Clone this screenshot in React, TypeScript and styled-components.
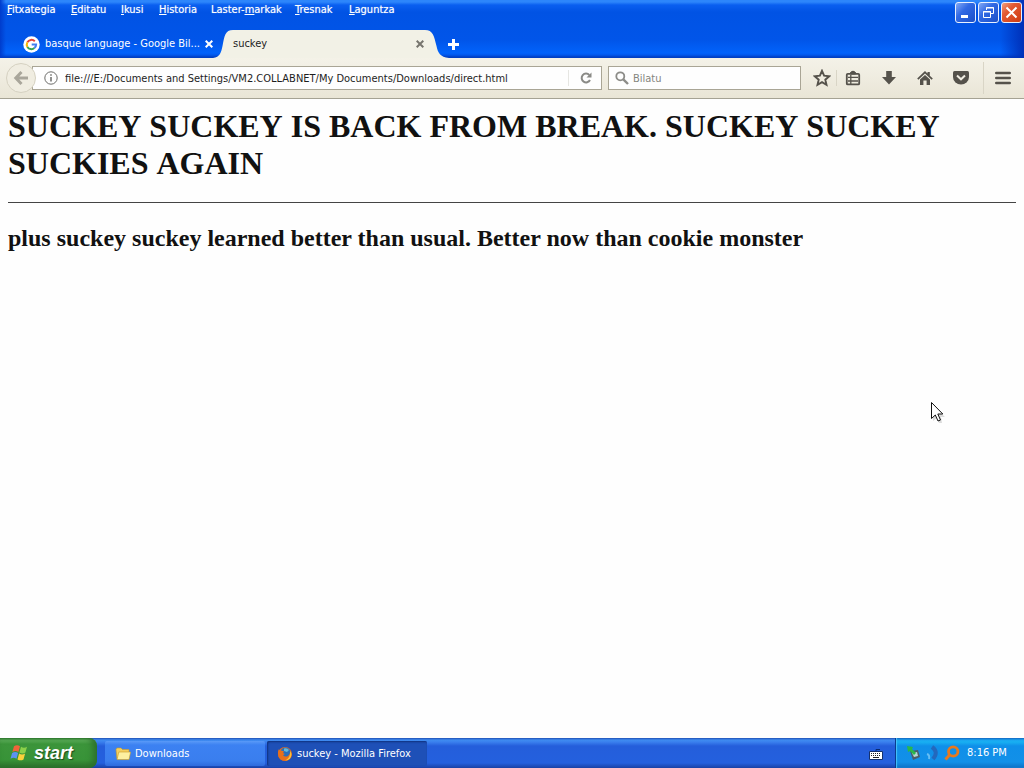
import React from "react";
import styled, { createGlobalStyle, css } from "styled-components";

const GlobalStyle = createGlobalStyle`
  * { box-sizing: border-box; }
  body { margin: 0; background: #fefefe; }
  button, input { font: inherit; color: inherit; }
  button { padding: 0; border: 0; background: none; }
`;

const Desktop = styled.div`
  position: relative;
  display: flex;
  flex-direction: column;
  min-height: 100vh;
  font: 11px/16px "DejaVu Sans Condensed", "Noto Sans", sans-serif;
`;

const TitleBar = styled.header`
  display: flex;
  flex-direction: column;
  justify-content: space-between;
  height: 58px;
  color: #fff;
  background:
    linear-gradient(90deg, #003ccc 0, transparent 6px, transparent calc(100% - 24px), #0030b8 100%),
    linear-gradient(#2d86fb 0, #2d86fb 2px, #0a5ff0 5px, #0153e4 12px, #0155e9 40px, #0263fb 53px, #0258ec 55px, #0140c4 57px, #0140c4 100%);
`;

const TopRow = styled.div`
  display: flex;
  justify-content: space-between;
  height: 24px;
`;

const Menu = styled.nav`
  display: flex;
  gap: 16px;
  padding: 2px 7px;
`;

const MenuItem = styled.button<{ $width: number }>`
  width: ${(p) => p.$width}px;
  height: 16px;
  white-space: nowrap;
  text-align: left;
  line-height: 16px;
  text-shadow: 0 0 1px #ffffff99;
`;

const WindowControls = styled.div`
  display: flex;
  gap: 2px;
  padding: 2px 2px 0 0;
`;

const ControlButton = styled.button<{ $close?: boolean }>`
  display: grid;
  place-items: center;
  width: 21px;
  height: 21px;
  border: 1px solid #e8f0ff;
  border-radius: 3px;
  background: ${(p) =>
    p.$close
      ? "linear-gradient(135deg, #f0a080, #e35a33 35%, #cf3b10)"
      : "linear-gradient(135deg, #83a9f5, #3169e4 40%, #1a4fc8)"};
`;

const TabStrip = styled.div`
  display: flex;
  height: 28px;
  padding-left: 23px;
`;

const InactiveTab = styled.div`
  display: flex;
  align-items: center;
  width: 190px;
  gap: 5px;
  text-shadow: 0 0 1px #ffffff99;
`;

const ActiveTab = styled.div`
  display: flex;
  width: 236px;
`;

const ActiveTabBody = styled.div`
  display: flex;
  flex: 1;
  align-items: center;
  background: #f2f1e6;
  color: #222;
`;

const TabTitle = styled.button`
  flex: 1;
  white-space: nowrap;
  text-align: left;
`;

const IconButton = styled.button<{ $size: number }>`
  display: grid;
  flex: none;
  place-items: center;
  width: ${(p) => p.$size}px;
  height: 24px;
`;

const NewTabButton = styled(IconButton)`
  height: 28px;
  margin-left: -4px;
`;

const Toolbar = styled.div`
  display: flex;
  align-items: center;
  height: 41px;
  padding: 0 2px 0 6px;
  color: #55524b;
  background: linear-gradient(#f4f2e8, #efece0 50%, #e9e5d6);
  border-bottom: 1px solid #a5a293;
`;

const BackButton = styled.button`
  display: grid;
  flex: none;
  place-items: center;
  z-index: 1;
  width: 30px;
  height: 30px;
  margin-right: -4px;
  border: 1px solid #d5d1c1;
  border-radius: 50%;
  background: #f0ede1;
`;

const field = css`
  display: flex;
  align-items: center;
  height: 24px;
  border: 1px solid #a9a595;
  background: #fefefe;
`;

const AddressBar = styled.div`
  ${field}
  flex: 1;
  min-width: 0;
  gap: 2px;
  padding-left: 6px;
`;

const SearchBar = styled.label`
  ${field}
  width: 193px;
  margin: 0 7px 0 6px;
  padding-left: 6px;
  gap: 4px;
`;

const TextInput = styled.input`
  flex: 1;
  min-width: 0;
  height: 20px;
  padding: 0;
  border: 0;
  outline: 0;
  background: transparent;
  color: #1d1d1d;
  &::placeholder { color: #85857f; opacity: 1; }
`;

const Separator = styled.span<{ $tall?: boolean }>`
  width: 1px;
  height: ${(p) => (p.$tall ? 32 : 16)}px;
  margin-left: ${(p) => (p.$tall ? 2 : 0)}px;
  background: #d9d5c6;
`;

const FieldSeparator = styled(Separator)`
  background: #e6e6e2;
`;

const Page = styled.main`
  flex: 1;
  padding: 9px 8px;
  color: #111;
  font-family: "Liberation Serif", serif;
`;

const Heading = styled.h1`
  margin: 0 0 20px;
  font-size: 32px;
  line-height: 37px;
  font-kerning: none;
`;

const Rule = styled.hr`
  height: 1px;
  margin: 0;
  border: 0;
  background: #444;
`;

const SubHeading = styled.h2`
  margin: 22px 0 0;
  font-size: 24px;
  line-height: 27px;
`;

const Pointer = styled.svg`
  position: absolute;
  left: 930px;
  top: 401px;
`;

const Taskbar = styled.footer`
  display: flex;
  height: 30px;
  color: #fff;
  background: linear-gradient(#1f4fb4 0, #3f8bf0 2px, #3a80ee 4px, #245edb 8px, #2460de 25px, #1941a5 30px);
`;

const StartButton = styled.button`
  display: flex;
  align-items: center;
  gap: 5px;
  width: 97px;
  padding: 0 0 1px 10px;
  border-radius: 0 8px 8px 0;
  font: italic bold 18px/24px "Liberation Sans", sans-serif;
  text-shadow: 1px 1px 1px #1c4a1c;
  background: linear-gradient(#2d7a2d 0, #5fb45c 2px, #3c953b 6px, #389338 22px, #2a6f2a 30px);
  box-shadow: inset -4px 0 6px #2c702c;
`;

const TaskList = styled.div`
  display: flex;
  flex: 1;
  gap: 2px;
  padding: 3px 0 2px 8px;
`;

const TaskButton = styled.button<{ $active?: boolean }>`
  display: flex;
  align-items: center;
  gap: 4px;
  width: 160px;
  padding-left: 10px;
  border-radius: 2px;
  background: ${(p) =>
    p.$active ? "#1e50b7" : "linear-gradient(#5a9af8, #3c81f2 4px, #3a7eee 20px, #2f6bdd)"};
  box-shadow: ${(p) => (p.$active ? "inset 1px 1px 2px #0f307c" : "none")};
`;

const LanguageButton = styled.button`
  display: grid;
  place-items: center;
  width: 38px;
  padding-top: 2px;
`;

const Tray = styled.div`
  display: flex;
  align-items: center;
  width: 129px;
  gap: 3px;
  padding-left: 10px;
  border-left: 1px solid #0a3c8e;
  background: linear-gradient(#0c59b9 0, #1aa5f0 2px, #18b0f2 4px, #0f8fe9 8px, #1290e8 24px, #0d6fc4 30px);
  box-shadow: inset 1px 0 1px #48c4fb;
`;

const Clock = styled.time`
  margin-left: 4px;
  white-space: nowrap;
`;

const menuItems = [
  { before: "", key: "F", after: "itxategia", width: 48 },
  { before: "", key: "E", after: "ditatu", width: 34 },
  { before: "", key: "I", after: "kusi", width: 22 },
  { before: "", key: "H", after: "istoria", width: 36 },
  { before: "Laster-", key: "m", after: "arkak", width: 68 },
  { before: "", key: "T", after: "resnak", width: 38 },
  { before: "", key: "L", after: "aguntza", width: 46 },
];

const Cross = ({ color }: { color: string }) => (
  <svg width="8" height="8" viewBox="0 0 8 8" stroke={color} strokeWidth="2">
    <path d="M.7.7l6.6 6.6M7.3.7L.7 7.3" />
  </svg>
);

const GoogleIcon = () => (
  <svg width="17" height="17" viewBox="0 0 17 17" fill="none" strokeWidth="2">
    <circle cx="8.5" cy="8.5" r="8.2" fill="#fff" />
    <path d="M11.8 5.2A4.7 4.7 0 0 0 4.4 6.3" stroke="#e54335" />
    <path d="M4.4 6.3a4.7 4.7 0 0 0 0 4.6" stroke="#f6b704" />
    <path d="M4.4 10.9a4.7 4.7 0 0 0 7 1.2" stroke="#34a353" />
    <path d="M11.4 12.1a4.7 4.7 0 0 0 1.7-3.5H8.7" stroke="#4280ef" />
  </svg>
);

const WindowsFlag = () => (
  <svg width="19" height="18" viewBox="0 0 19 18">
    <path d="M4 2.2q3-2 6 0L8.4 8q-3-1.8-6 0z" fill="#f0643a" />
    <path d="M11 2.8q3 1.8 6 0L15.4 8.5q-3 1.8-6 0z" fill="#8bd04a" />
    <path d="M2.1 9q3-1.9 6 0l-1.6 5.7q-3-1.8-6 0z" fill="#5c92f2" />
    <path d="M9.1 9.6q3 1.8 6 0l-1.6 5.8q-3 1.8-6 0z" fill="#fbd13b" />
  </svg>
);

const FolderIcon = () => (
  <svg width="16" height="16" viewBox="0 0 16 16" stroke="#c99a26" strokeWidth=".6">
    <path d="M1 3.5L2 2h4l1.500 1.500H14V13H2z" fill="#f4cf5e" />
    <path d="M3.800 6H15.600L14 13.600H2z" fill="#fdf0a0" />
  </svg>
);

const FirefoxIcon = () => (
  <svg width="16" height="16" viewBox="0 0 16 16">
    <circle cx="8" cy="8" r="7" fill="#e66a1b" />
    <circle cx="8.4" cy="6.8" r="5.2" fill="#2b6fb8" />
    <path d="M7 2.500q3-1 5 1.500l-2 2-3-1z" fill="#5fb8dc" />
    <path d="M1.500 3.500L4 4.600l3 .6-1 1.800 1.800 1-1.800 1.200q2 2.200 5 .8 2.500-1.500 2-5.200Q15.800 9 12.800 13 8 16.400 3.500 13.400-.3 9.800 1.500 3.500z" fill="#e8701a" />
    <path d="M13.200 4.800Q15.800 9 12.800 12.800q-2 1.800-4.500 1.700 5.500-3 4.900-9.700z" fill="#fbc63c" />
  </svg>
);

export default function App() {
  return (
    <Desktop>
      <GlobalStyle />
      <TitleBar>
        <TopRow>
          <Menu>
            {menuItems.map((m) => (
              <MenuItem key={m.after} $width={m.width}>
                {m.before}<u>{m.key}</u>{m.after}
              </MenuItem>
            ))}
          </Menu>
          <WindowControls>
            <ControlButton aria-label="Minimize">
              <svg width="15" height="15" viewBox="0 0 15 15"><path d="M3 10h7v3H3z" fill="#fff" /></svg>
            </ControlButton>
            <ControlButton aria-label="Restore">
              <svg width="15" height="15" viewBox="0 0 15 15" fill="none" stroke="#fff">
                <path d="M5.500 5V2.500h7v6H10M5 3h8M2.500 6.500h7v6h-7zM2 7h8" />
              </svg>
            </ControlButton>
            <ControlButton $close aria-label="Close">
              <svg width="15" height="15" viewBox="0 0 15 15" stroke="#fff" strokeWidth="2"><path d="M2.500 2.500l10 10M12.500 2.500l-10 10" /></svg>
            </ControlButton>
          </WindowControls>
        </TopRow>
        <TabStrip>
          <InactiveTab>
            <GoogleIcon />
            <TabTitle>basque language - Google Bil...</TabTitle>
            <IconButton $size={8} aria-label="Close tab"><Cross color="#fff" /></IconButton>
          </InactiveTab>
          <ActiveTab>
            <svg width="20" height="28" viewBox="0 0 20 28"><path d="M0 28C7 27 8 23 9.500 16C11.500 6 12 0 20 0V28z" fill="#f2f1e6" /></svg>
            <ActiveTabBody>
              <TabTitle>suckey</TabTitle>
              <IconButton $size={10} aria-label="Close tab"><Cross color="#77756e" /></IconButton>
            </ActiveTabBody>
            <svg width="24" height="28" viewBox="0 0 24 28"><path d="M24 28C15 27 13 23 11.500 16C9 6 8 0 0 0V28z" fill="#f2f1e6" /></svg>
          </ActiveTab>
          <NewTabButton $size={16} aria-label="New tab">
            <svg width="11" height="11" viewBox="0 0 11 11"><path d="M4 0h3v4h4v3H7v4H4V7H0V4h4z" fill="#fff" /></svg>
          </NewTabButton>
        </TabStrip>
      </TitleBar>

      <Toolbar>
        <BackButton aria-label="Back">
          <svg width="16" height="16" viewBox="0 0 16 16" fill="none" stroke="#a9a69b" strokeWidth="3"><path d="M8.500 2L2.800 8l5.700 6M3 8h12" /></svg>
        </BackButton>
        <AddressBar>
          <IconButton $size={24} aria-label="Site information">
            <svg width="14" height="14" viewBox="0 0 14 14" fill="none" stroke="#6b6b68"><circle cx="7" cy="7" r="6.200" /><path d="M7 6v4.500M7 3.300v1.500" strokeWidth="1.500" /></svg>
          </IconButton>
          <TextInput
            aria-label="Address"
            defaultValue="file:///E:/Documents and Settings/VM2.COLLABNET/My Documents/Downloads/direct.html"
          />
          <FieldSeparator />
          <IconButton $size={30} aria-label="Reload">
            <svg width="12" height="12" viewBox="0 0 12 12"><path d="M9.300 3A4.400 4.400 0 1 0 10 8" fill="none" stroke="#8a8a86" strokeWidth="2" /><path d="M11.500.5V5.500H6.500z" fill="#8a8a86" /></svg>
          </IconButton>
        </AddressBar>
        <SearchBar>
          <svg width="14" height="14" viewBox="0 0 14 14" fill="none" stroke="#8c8c88"><circle cx="5.300" cy="5.300" r="4" strokeWidth="1.800" /><path d="M8.300 8.300l4.700 4.700" strokeWidth="2.400" /></svg>
          <TextInput placeholder="Bilatu" aria-label="Search" />
        </SearchBar>
        <IconButton $size={28} aria-label="Bookmark">
          <svg width="18" height="18" viewBox="0 0 18 18" fill="none" stroke="currentColor" strokeWidth="1.900"><path d="M9 1.800l2.100 4.900 5.200.5-4 3.500 1.200 5.100L9 13.100l-4.500 2.700 1.200-5.100-4-3.500 5.200-.5z" /></svg>
        </IconButton>
        <Separator />
        <IconButton $size={32} aria-label="Bookmarks list">
          <svg width="16" height="16" viewBox="0 0 16 16" fill="none" stroke="currentColor"><rect x="1.800" y="3.800" width="12.400" height="10.600" rx="1" strokeWidth="1.800" /><path d="M5.500 4V2.500Q8-.3 10.500 2.500V4z" fill="currentColor" /><path d="M3 7.300h10M3 11h10M5.800 5v9" strokeWidth="1.300" /></svg>
        </IconButton>
        <IconButton $size={40} aria-label="Downloads">
          <svg width="16" height="16" viewBox="0 0 16 16" fill="currentColor"><path d="M5.200 1h5.600V7H15l-7 7.500L1 7h4.200z" /></svg>
        </IconButton>
        <IconButton $size={32} aria-label="Home">
          <svg width="16" height="16" viewBox="0 0 16 16" fill="currentColor"><path d="M8 1l2.500 2.400V2h2.300v3.700L15.800 8.500l-1.200 1.200L8 3.600 1.400 9.700.2 8.500z" /><path d="M8 5l5 4.600V15H9.600v-4.500H6.400V15H3V9.600z" /></svg>
        </IconButton>
        <IconButton $size={40} aria-label="Pocket">
          <svg width="18" height="16" viewBox="0 0 18 16"><path d="M2.500 1h13Q17 1 17 2.500V7a8 7.500 0 0 1-16 0V2.500Q1 1 2.500 1z" fill="currentColor" /><path d="M5 5.500l4 3.800 4-3.800" fill="none" stroke="#f0ede2" strokeWidth="2" /></svg>
        </IconButton>
        <Separator $tall />
        <IconButton $size={38} aria-label="Open menu">
          <svg width="16" height="14" viewBox="0 0 16 14" stroke="currentColor" strokeWidth="2.600" strokeLinecap="round"><path d="M1.300 2h13.400M1.300 7h13.400M1.300 12h13.400" /></svg>
        </IconButton>
      </Toolbar>

      <Page>
        <Heading>SUCKEY SUCKEY IS BACK FROM BREAK. SUCKEY SUCKEY SUCKIES AGAIN</Heading>
        <Rule />
        <SubHeading>plus suckey suckey learned better than usual. Better now than cookie monster</SubHeading>
      </Page>

      <Taskbar>
        <StartButton><WindowsFlag />start</StartButton>
        <TaskList>
          <TaskButton><FolderIcon />Downloads</TaskButton>
          <TaskButton $active><FirefoxIcon />suckey - Mozilla Firefox</TaskButton>
        </TaskList>
        <LanguageButton aria-label="Keyboard">
          <svg width="14" height="12" viewBox="0 0 14 12"><path d="M7 4V1.500h4" fill="none" stroke="#0b2a70" /><path d="M.5 3.500h13v8H.5z" fill="#fff" stroke="#14316e" /><path d="M2 5.500h10M2 7.500h10" stroke="#222" strokeDasharray="1 1" /><path d="M4 9.500h6" stroke="#222" /></svg>
        </LanguageButton>
        <Tray>
          <svg width="16" height="16" viewBox="0 0 16 16"><path d="M4 6l8-1 2 7-7 3z" fill="#4c5d69" /><path d="M6 8l5-1 1 4-4 1z" fill="#b4d8d2" /><path d="M1 1l6 1-1 2 4 4-2 2-4-4-2 1z" fill="#29b84a" /></svg>
          <svg width="16" height="16" viewBox="0 0 16 16" fill="none"><path d="M7 2q7 5 1 12" stroke="#2368bd" strokeWidth="4" /><path d="M2 9q3 1 2 5" stroke="#64bdf4" strokeWidth="2" /></svg>
          <svg width="16" height="16" viewBox="0 0 16 16" fill="none" stroke="#e8791c"><circle cx="9.200" cy="6.500" r="4.700" strokeWidth="2.800" /><path d="M5.500 10L1.500 14.500" strokeWidth="3" /></svg>
          <Clock>8:16 PM</Clock>
        </Tray>
      </Taskbar>

      <Pointer width="15" height="23" viewBox="0 0 15 23">
        <path d="M3 4v16l4-3 2 5h3l-1-6h4z" fill="#0002" />
        <path d="M1.500 1.500v16l3.800-3.500 2.700 6 2.500-1-2.700-6h5z" fill="#fff" stroke="#111" />
      </Pointer>
    </Desktop>
  );
}
